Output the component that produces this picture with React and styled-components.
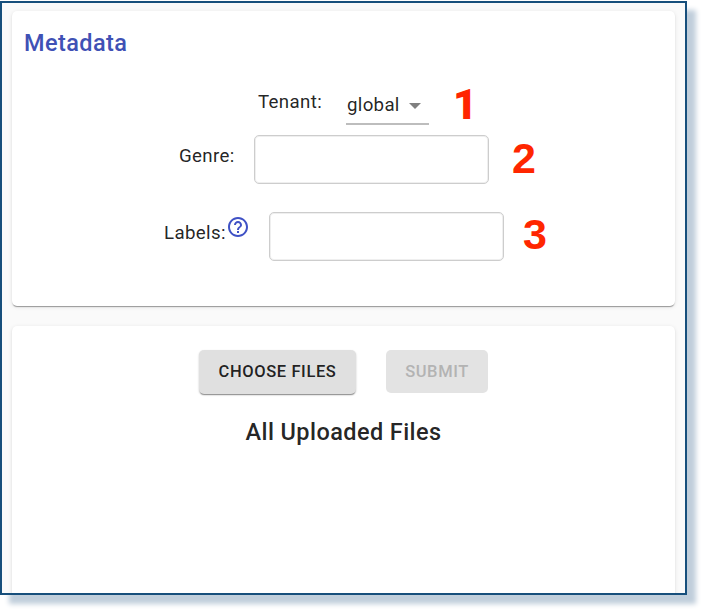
import React from "react";
import styled, { createGlobalStyle } from "styled-components";

const GlobalStyle = createGlobalStyle`
  * { box-sizing: border-box; }
  html, body { margin: 0; background: #fff; }
  body {
    height: 614px;
    overflow: hidden;
    font-family: Roboto, "Liberation Sans", sans-serif;
    color: rgba(0, 0, 0, 0.87);
  }
`;

const Frame = styled.main`
  width: 687px;
  height: 594px;
  margin-top: 1px;
  padding: 8px 10px 0;
  display: flex;
  flex-direction: column;
  gap: 20px;
  background: #fafafa;
  border: 2px solid #174f7c;
  box-shadow: 9px 9px 5px #c0cedb;
  overflow: hidden;
`;

const Card = styled.section`
  flex: none;
  height: ${(p) => p.$height}px;
  background: #fff;
  border-radius: 5px;
  box-shadow: 0 2px 1px -1px rgba(0, 0, 0, 0.24), 0 1px 1px rgba(0, 0, 0, 0.14),
    0 1px 4px rgba(0, 0, 0, 0.1);
`;

const CardTitle = styled.h2`
  margin: 0;
  padding: 17px 0 0 12px;
  height: 65px;
  font-size: 23.5px;
  line-height: 30px;
  font-weight: 500;
  letter-spacing: 0.42px;
  color: #3f51b5;
`;

const Field = styled.div`
  display: flex;
  align-items: flex-start;
  height: ${(p) => p.$height}px;
  padding-left: ${(p) => p.$indent}px;
`;

const Label = styled.label`
  width: ${(p) => p.$width}px;
  padding-top: ${(p) => p.$top}px;
  display: flex;
  font-size: 18.7px;
  line-height: 24px;
  letter-spacing: 0.35px;
  white-space: nowrap;
`;

const Select = styled.div`
  width: 83px;
  height: 44px;
  margin-top: 5px;
  padding: 12px 8px 0 1px;
  display: flex;
  justify-content: space-between;
  font-size: 18.7px;
  line-height: 24px;
  letter-spacing: 0.3px;
  border-bottom: 2px solid #bdbdbd;
`;

const Arrow = styled.svg`
  width: 12px;
  height: 6px;
  margin-top: 10px;
  fill: #808080;
`;

const Input = styled.input`
  width: 235px;
  height: 49px;
  border: 1px solid #cdcdcd;
  border-radius: 5px;
  background: #fff;
  box-shadow: inset 0 0 0 1px #efefef;
  outline: none;
`;

const Help = styled.svg`
  flex: none;
  width: 24px;
  height: 24px;
  margin: -6px 0 0 0;
  fill: #3f51c5;
`;

const Marker = styled.span`
  margin: ${(p) => p.$top}px 0 0 ${(p) => p.$left}px;
  font: bold 43px/44px "Liberation Sans", Arial, sans-serif;
  color: #ff2600;
`;

const NarrowMarker = styled(Marker)`
  font: 900 42px/44px Roboto, sans-serif;
`;

const Actions = styled.div`
  display: flex;
  gap: 30px;
  padding: 24px 0 0 187px;
`;

const Button = styled.button`
  width: ${(p) => p.$width}px;
  height: 44px;
  padding: 0;
  border: 0;
  border-radius: 5px;
  background: #e0e0e0;
  color: rgba(0, 0, 0, 0.87);
  font: 500 16.5px/44px Roboto, sans-serif;
  letter-spacing: 0.6px;
  white-space: nowrap;
  box-shadow: 0 2px 1px -1px rgba(0, 0, 0, 0.3), 0 1px 2px rgba(0, 0, 0, 0.24);

  &:disabled {
    height: 43px;
    background: #e3e3e3;
    color: #b3b3b3;
    box-shadow: none;
  }
`;

const ListTitle = styled.h3`
  margin: 22px 0 0;
  font-size: 23.5px;
  line-height: 32px;
  font-weight: 500;
  letter-spacing: 0.42px;
  text-align: center;
`;

export default function App() {
  return (
    <>
      <GlobalStyle />
      <Frame>
        <Card $height={295}>
          <CardTitle>Metadata</CardTitle>
          <Field $height={59} $indent={246}>
            <Label $width={88} $top={14}>Tenant:</Label>
            <Select>
              global
              <Arrow viewBox="0 0 12 6"><path d="M0 0h12L6 6z" /></Arrow>
            </Select>
            <NarrowMarker $top={7} $left={24}>1</NarrowMarker>
          </Field>
          <Field $height={77} $indent={167}>
            <Label $width={75} $top={9}>Genre:</Label>
            <Input aria-label="Genre" />
            <Marker $top={1} $left={23}>2</Marker>
          </Field>
          <Field $height={60} $indent={152}>
            <Label $width={105} $top={9}>
              Labels:
              <Help viewBox="0 0 24 24">
                <path d="M11 18h2v-2h-2v2zm1-16C6.48 2 2 6.48 2 12s4.48 10 10 10 10-4.48 10-10S17.52 2 12 2zm0 18c-4.41 0-8-3.59-8-8s3.59-8 8-8 8 3.59 8 8-3.59 8-8 8zm0-14c-2.21 0-4 1.79-4 4h2c0-1.1.9-2 2-2s2 .9 2 2c0 2-3 1.75-3 5h2c0-2.25 3-2.5 3-5 0-2.21-1.79-4-4-4z" />
              </Help>
            </Label>
            <Input aria-label="Labels" />
            <Marker $top={0} $left={19}>3</Marker>
          </Field>
        </Card>
        <Card $height={290}>
          <Actions>
            <Button $width={157}>CHOOSE FILES</Button>
            <Button $width={102} disabled>SUBMIT</Button>
          </Actions>
          <ListTitle>All Uploaded Files</ListTitle>
        </Card>
      </Frame>
    </>
  );
}
